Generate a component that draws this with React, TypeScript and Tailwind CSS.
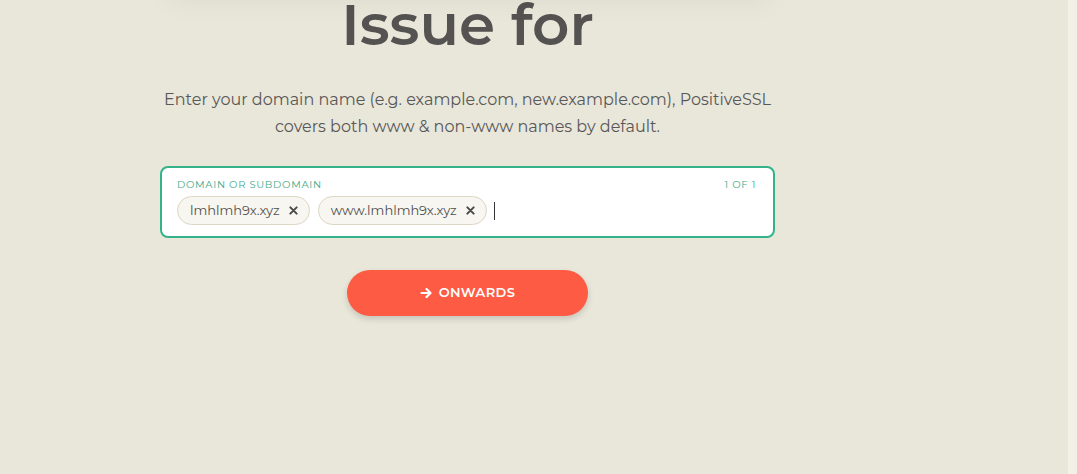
import type { FC } from 'react';

const font = { fontFamily: '"Montserrat", "Open Sans", "Noto Sans", sans-serif' };

type ChipProps = { label: string };

const DomainChip: FC<ChipProps> = ({ label }) => (
  <span className="flex h-[29px] items-center gap-[9px] rounded-full border border-[#ddd6c4] bg-[#f8f6f0] pl-[12px] pr-[11px] text-[13px] text-[#4f4f4f]">
    <span>{label}</span>
    <svg viewBox="0 0 10 10" className="h-[9px] w-[9px]" fill="none" stroke="#4a4a4a" strokeWidth="2.2" strokeLinecap="round">
      <path d="M1.5 1.5l7 7M8.5 1.5l-7 7" />
    </svg>
  </span>
);

const App: FC = () => {
  return (
    <div className="flex h-[474px] w-full overflow-hidden bg-[#e9e6da]" style={font}>
      <div className="relative flex-1">
        <div className="absolute left-[170px] top-[-40px] h-[40px] w-[600px] shadow-[0_0_30px_rgba(0,0,0,0.06)]" />
        <div className="ml-[160px] flex w-[615px] flex-col items-center">
          <h1 className="mt-[-13px] text-[58px] font-semibold leading-[76px] text-[#545351]">Issue for</h1>
          <p className="mt-[23px] text-center text-[16px] leading-[27px] text-[#585858]">
            Enter your domain name (e.g. example.com, new.example.com), PositiveSSL
            <br />
            covers both www &amp; non-www names by default.
          </p>
          <div className="mt-[26px] w-full rounded-[8px] border-2 border-[#34b38a] bg-white px-[15px] pb-[11px] pt-[9px]">
            <div className="flex items-center justify-between pr-[1px] text-[10px] uppercase tracking-[0.7px] text-[#43a98a]">
              <span>Domain or Subdomain</span>
              <span className="pr-[1px]">1 of 1</span>
            </div>
            <div className="mt-[4px] flex items-center gap-[8px]">
              <DomainChip label="lmhlmh9x.xyz" />
              <DomainChip label="www.lmhlmh9x.xyz" />
              <span className="ml-[-1px] h-[18px] w-px bg-[#333]" />
            </div>
          </div>
          <button className="mt-[32px] flex h-[46px] w-[241px] items-center justify-center gap-[7px] rounded-full bg-[#fd5b43] text-[13px] font-semibold uppercase tracking-[0.4px] text-white shadow-[0_3px_6px_rgba(0,0,0,0.15)]">
            <svg viewBox="0 0 12 12" className="h-[12px] w-[12px]" fill="none" stroke="white" strokeWidth="2.2" strokeLinecap="round" strokeLinejoin="round">
              <path d="M1.5 6h8.5M6.5 2l4 4-4 4" />
            </svg>
            Onwards
          </button>
        </div>
      </div>
      <div className="h-full w-[9px] bg-[#f3f0e8]" />
    </div>
  );
};

export default App;
